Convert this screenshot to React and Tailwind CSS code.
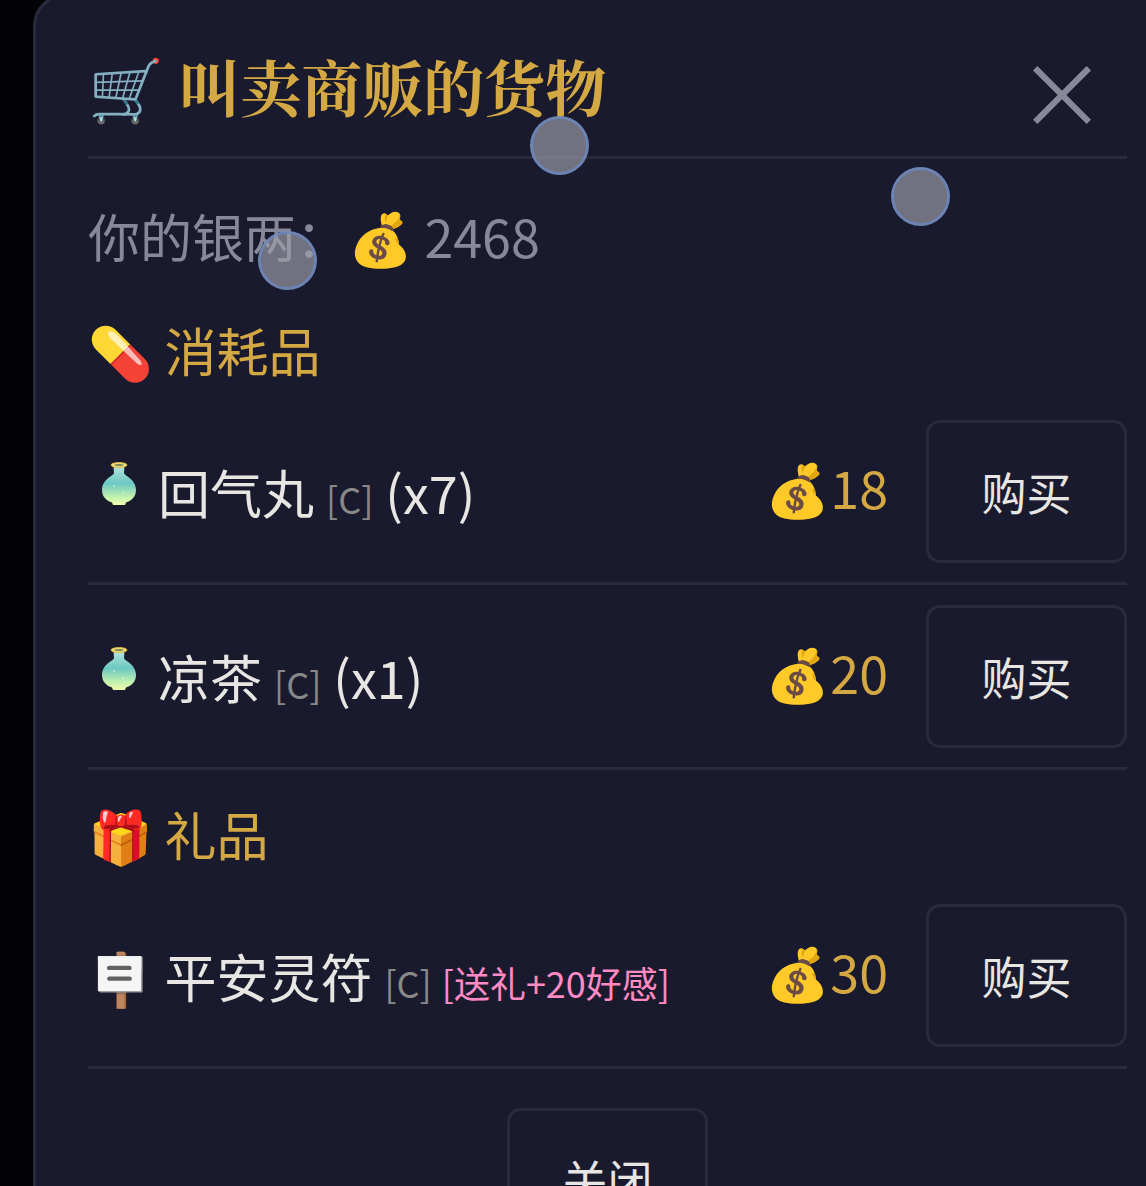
const serif = { fontFamily: '"Noto Serif CJK SC", "Liberation Serif", "Noto Sans CJK SC", serif' }

function Vial() {
  return (
    <svg width="36" height="44" viewBox="0 0 36 44" className="ml-[13px] mr-[21px] -mt-[16px] shrink-0">
      <defs>
        <linearGradient id="vialFill" x1="0" y1="0" x2="0" y2="1">
          <stop offset="0" stopColor="#b5e4da" />
          <stop offset="0.45" stopColor="#6cc8c2" />
          <stop offset="0.8" stopColor="#c4f2ae" />
          <stop offset="1" stopColor="#f2fbb0" />
        </linearGradient>
      </defs>
      <path d="M12.5 4 L23.5 4 L23 11 C23.5 14 35 17 35 28 C35 35 30 39 25 40.5 L24 43 L12 43 L11 40.5 C6 39 1 35 1 28 C1 17 12.5 14 13 11 Z" fill="url(#vialFill)" />
      <ellipse cx="18" cy="3" rx="8" ry="2.4" fill="#f4df7a" stroke="#d9b94a" />
      <ellipse cx="18" cy="3" rx="4.5" ry="1" fill="#7b8a5a" />
      <circle cx="13" cy="24" r="1" fill="#ffffff" fillOpacity="0.5" />
      <circle cx="22" cy="31" r="1" fill="#ffffff" fillOpacity="0.5" />
    </svg>
  )
}

const items = [
  { icon: <Vial />, name: '回气丸', tag: '(x7)', price: 18 },
  { icon: <Vial />, name: '凉茶', tag: '(x1)', price: 20 },
]

function Row({ icon, name, tag, gift, price }) {
  return (
    <div className="flex items-center pt-[20px] pb-[19px] border-b-[3px] border-[#2a2a3e]">
      <div className="flex-1 flex items-center">
        {icon}
        <div className="flex items-baseline">
          <span className="text-[52px] text-[#e8e6e3]">{name}</span>
          <span className="text-[36px] text-[#888] ml-3">[C]</span>
          {tag && <span className="text-[52px] text-[#e8e6e3] ml-3">{tag}</span>}
          {gift && <span className="text-[36px] text-[#ff8ac4] ml-[10px]">{gift}</span>}
        </div>
      </div>
      <div className="flex items-center text-[52px] text-[#d4a843] mr-[38px] mb-[9px]">
        <span>💰</span>
        <span>{price}</span>
      </div>
      <button className="w-[201px] h-[143px] border-[3px] border-[#2a2a3e] rounded-[14px] text-[45px] text-[#e8e6e3]">
        购买
      </button>
    </div>
  )
}

export default function App() {
  return (
    <div
      className="relative w-[1146px] h-[1186px] overflow-hidden bg-[#030305]"
      style={{ fontFamily: '"Noto Sans CJK SC", "Noto Color Emoji", sans-serif' }}
    >
      <div className="ml-[33px] -mt-[6px] w-[1200px] h-[1300px] bg-[#1a1a2e] border-[3px] border-[#2a2a3e] rounded-[32px] pl-[52px] pt-[44px]">
        <div className="w-[1039px]">
          <div className="flex items-center justify-between h-[118px] pb-[26px] border-b-[3px] border-[#2a2a3e]">
            <h1 className="text-[61px] font-bold text-[#d4a843]" style={serif}>🛒 叫卖商贩的货物</h1>
            <span className="text-[#888899] text-[90px] font-normal leading-none mt-2 mr-[20px]">×</span>
          </div>
          <div className="text-[52px] text-[#888899] mt-[38px]">你的银两：💰 2468</div>
          <div className="text-[52px] text-[#d4a843] mt-[36px] mb-[11px]">💊 消耗品</div>
          {items.map((item) => <Row key={item.name} {...item} />)}
          <div className="text-[52px] text-[#d4a843] mt-[25px] mb-[11px]">🎁 礼品</div>
          <Row name="🪧 平安灵符" gift="[送礼+20好感]" price={30} />
          <div className="flex justify-center mt-[39px]">
            <button className="w-[201px] h-[143px] border-[3px] border-[#2a2a3e] rounded-[14px] text-[45px] text-[#e8e6e3]">关闭</button>
          </div>
        </div>
      </div>
      <div className="absolute left-[530px] top-[116px] w-[59px] h-[59px] rounded-full bg-[#a0a0aa]/65 border-[3px] border-[#6c88c0]/80" />
      <div className="absolute left-[891px] top-[167px] w-[59px] h-[59px] rounded-full bg-[#a0a0aa]/65 border-[3px] border-[#6c88c0]/80" />
      <div className="absolute left-[258px] top-[231px] w-[59px] h-[59px] rounded-full bg-[#a0a0aa]/65 border-[3px] border-[#6c88c0]/80" />
    </div>
  )
}
